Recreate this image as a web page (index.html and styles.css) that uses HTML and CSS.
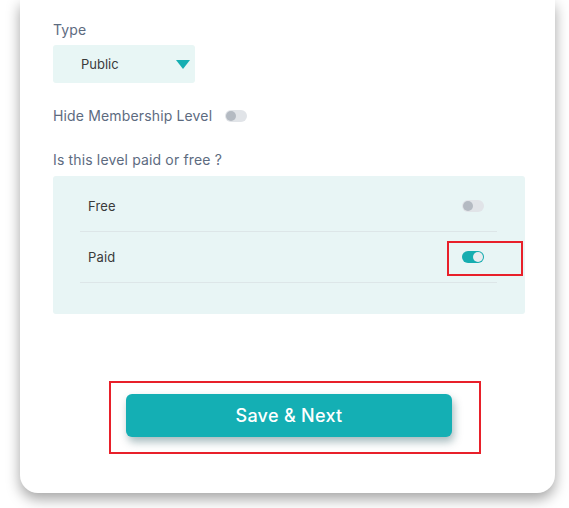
FILE: index.html
```html
<!doctype html>
<html>
    <head>
        <meta charset="utf-8">
        <meta name="viewport" content="width=device-width,initial-scale=1.0">
        <link rel="stylesheet" href="styles.css">
    </head>
    <body>
        <section class="card">
            <div class="field-label">Type</div>
            <div class="select">
                <span>Public</span>
                <span class="caret"></span>
            </div>

            <div class="hide-row">
                <span class="field-label">Hide Membership Level</span>
                <span class="toggle"></span>
            </div>

            <div class="field-label question">Is this level paid or free ?</div>
            <div class="panel">
                <div class="option">
                    <span>Free</span>
                    <span class="toggle"></span>
                </div>
                <div class="option">
                    <span>Paid</span>
                    <span class="toggle on"></span>
                    <span class="mark mark-toggle"></span>
                </div>
            </div>

            <div class="mark-box">
                <button class="save-btn">Save &amp; Next</button>
            </div>
        </section>
    </body>
</html>
```

FILE: styles.css
```css
*{
    margin: 0;
    padding: 0;
    box-sizing: border-box;
}
html,body{
    height: 100%;
    background: #fff;
    overflow: hidden;
}
body{
    font-family: "Inter", "Noto Sans", sans-serif;
}
.card{
    margin-left: 20px;
    width: 535px;
    height: 493px;
    padding: 20px 30px 0 33px;
    background: #fff;
    border-radius: 0 0 18px 18px;
    box-shadow: 0 6px 14px rgba(0,0,0,0.36);
}
.field-label{
    font-size: 14px;
    line-height: 20px;
    letter-spacing: 0.15px;
    color: #5d6b7f;
}
.select{
    margin-top: 5px;
    width: 142px;
    height: 38px;
    padding: 0 5px 0 28px;
    display: flex;
    align-items: center;
    justify-content: space-between;
    background: #e8f6f5;
    border-radius: 3px;
    font-size: 13px;
    color: #3a3a3a;
}
.caret{
    width: 0;
    height: 0;
    border-left: 7px solid transparent;
    border-right: 7px solid transparent;
    border-top: 9px solid #15aeb2;
}
.hide-row{
    margin-top: 23px;
    display: flex;
    align-items: center;
    gap: 13px;
}
.question{
    margin-top: 24px;
}
.toggle{
    position: relative;
    width: 22px;
    height: 12px;
    border-radius: 6px;
    background: #e1e4e8;
    flex-shrink: 0;
}
.toggle::after{
    content: "";
    position: absolute;
    left: 1px;
    top: 1px;
    width: 10px;
    height: 10px;
    border-radius: 50%;
    background: #b4bac2;
}
.toggle.on{
    background: #17adb0;
}
.toggle.on::after{
    left: 11px;
    background: #e9ecef;
}
.panel{
    margin-top: 6px;
    height: 138px;
    padding: 5px 28px 0 27px;
    background: #e8f5f5;
    border-radius: 3px;
}
.option{
    position: relative;
    height: 51px;
    padding: 0 13px 0 8px;
    display: flex;
    align-items: center;
    justify-content: space-between;
    border-bottom: 1px solid #dde6e8;
    font-size: 13px;
    letter-spacing: 0.15px;
    color: #3a3a3a;
}
.mark{
    position: absolute;
    border: 2px solid #e8202a;
}
.mark-toggle{
    left: 367px;
    top: 9px;
    width: 76px;
    height: 35px;
}
.mark-box{
    margin: 67px 0 0 56px;
    width: 372px;
    height: 73px;
    padding: 11px 0 0 15px;
    border: 2px solid #e8202a;
}
.save-btn{
    width: 326px;
    height: 43px;
    border: none;
    border-radius: 6px;
    background: #14afb4;
    color: #fff;
    font-family: inherit;
    font-size: 18px;
    font-weight: 500;
    letter-spacing: 0.3px;
    box-shadow: 2px 5px 8px rgba(0,60,70,0.35);
}
```
